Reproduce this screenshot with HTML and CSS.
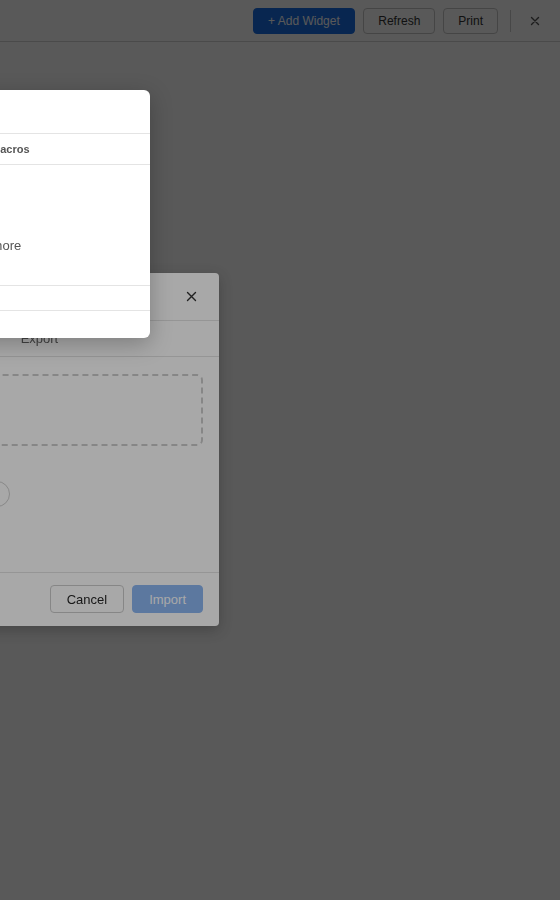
FILE: index.html
```html
<!DOCTYPE html>
<html lang="en">
<head>
<meta charset="utf-8">
<title>Dashboard</title>
<link rel="stylesheet" href="styles.css">
</head>
<body>
  <div class="app">
    <header class="toolbar">
      <button class="tb-btn primary">+ Add Widget</button>
      <button class="tb-btn">Refresh</button>
      <button class="tb-btn">Print</button>
      <span class="tb-divider"></span>
      <button class="tb-close" aria-label="Close">
        <svg width="10" height="10" viewBox="0 0 10 10"><path d="M1.5 1.5L8.5 8.5M8.5 1.5L1.5 8.5" stroke="#555" stroke-width="1.4" stroke-linecap="round"/></svg>
      </button>
    </header>
    <main class="canvas"></main>
  </div>

  <div class="scrim"></div>

  <section class="dialog">
    <div class="dlg-head">
      <h2 class="dlg-title">Import / Export</h2>
      <button class="dlg-close" aria-label="Close">
        <svg width="11" height="11" viewBox="0 0 11 11"><path d="M1.5 1.5L9.5 9.5M9.5 1.5L1.5 9.5" stroke="#333" stroke-width="1.4" stroke-linecap="round"/></svg>
      </button>
    </div>
    <nav class="dlg-tabs">
      <span class="tab active">Import</span>
      <span class="tab">Export</span>
    </nav>
    <div class="dlg-body">
      <div class="dropzone"></div>
      <div class="pill">Paste from clipboard</div>
    </div>
    <div class="dlg-foot">
      <button class="btn">Cancel</button>
      <button class="btn primary" disabled>Import</button>
    </div>
  </section>

  <div class="scrim scrim-top"></div>

  <section class="popup">
    <div class="pop-head">Macros</div>
    <div class="pop-row pop-th">
      <span>Name</span>
      <span>Macros</span>
    </div>
    <div class="pop-empty">
      <svg class="pop-icon" width="28" height="28" viewBox="0 0 28 28"><rect x="3" y="5" width="22" height="18" rx="2" fill="none" stroke="#bbb" stroke-width="1.5"/></svg>
      <p class="pop-empty-text">No macros yet. Learn more</p>
    </div>
    <div class="pop-row pop-sum"><span>Total</span><span></span></div>
    <div class="pop-foot"></div>
  </section>
</body>
</html>
```

FILE: styles.css
```css
* { box-sizing: border-box; }

html, body {
  margin: 0;
  padding: 0;
}

body {
  width: 560px;
  height: 900px;
  position: relative;
  overflow: hidden;
  background: #ffffff;
  font-family: "Liberation Sans", Arial, sans-serif;
  color: #333333;
}

.app {
  display: flex;
  flex-direction: column;
  height: 100%;
}

.toolbar {
  height: 42px;
  flex: none;
  display: flex;
  align-items: center;
  justify-content: flex-end;
  gap: 8px;
  padding: 0 13px 0 16px;
  background: #ffffff;
  border-bottom: 1px solid #d6d6d6;
}

.tb-btn {
  height: 26px;
  padding: 0 14px;
  border: 1px solid #c8c8c8;
  border-radius: 4px;
  background: #ffffff;
  color: #333333;
  font-family: inherit;
  font-size: 12px;
}

.tb-btn.primary {
  padding: 0 14.5px;
  background: #1a6fe6;
  border-color: #1a6fe6;
  color: #ffffff;
}

.tb-divider {
  width: 1px;
  height: 22px;
  margin: 0 4px;
  background: #cfcfcf;
}

.tb-close {
  width: 24px;
  height: 24px;
  padding: 0;
  border: 0;
  background: none;
  display: flex;
  align-items: center;
  justify-content: center;
}

.canvas {
  flex: 1;
}

.scrim {
  position: fixed;
  inset: 0;
  background: rgba(0, 0, 0, 0.47);
}

.scrim-top {
  background: rgba(0, 0, 0, 0.34);
}

/* Import / export dialog */
.dialog {
  position: absolute;
  top: 273px;
  left: -209px;
  width: 428px;
  background: #ffffff;
  border-radius: 4px;
  box-shadow: 0 4px 14px rgba(0, 0, 0, 0.22);
  display: flex;
  flex-direction: column;
}

.dlg-head {
  height: 48px;
  display: flex;
  align-items: center;
  justify-content: space-between;
  padding: 0 16px;
  border-bottom: 1px solid #e3e3e3;
}

.dlg-title {
  margin: 0;
  font-size: 15px;
  font-weight: bold;
  color: #222222;
}

.dlg-close {
  width: 24px;
  height: 24px;
  padding: 0;
  border: 0;
  background: none;
  display: flex;
  align-items: center;
  justify-content: center;
}

.dlg-tabs {
  height: 36px;
  display: flex;
  justify-content: center;
  border-bottom: 1px solid #e3e3e3;
}

.tab {
  padding: 0 16px 1px;
  display: flex;
  align-items: center;
  font-size: 13px;
  color: #666666;
}

.tab.active {
  color: #1a6fe6;
}

.dlg-body {
  height: 215px;
  padding: 17px 16px 0;
  display: flex;
  flex-direction: column;
}

.dropzone {
  height: 72px;
  border: 2px dashed #cccccc;
  border-radius: 6px;
}

.pill {
  margin-top: 35px;
  width: 203px;
  height: 26px;
  border: 1px solid #cfcfcf;
  border-radius: 13px;
  display: flex;
  align-items: center;
  justify-content: center;
  font-size: 12px;
  color: #555555;
}

.dlg-foot {
  display: flex;
  justify-content: flex-end;
  gap: 8px;
  padding: 12px 16px 13px;
  border-top: 1px solid #e3e3e3;
}

.btn {
  height: 28px;
  padding: 0 16px;
  border: 1px solid #cccccc;
  border-radius: 4px;
  background: #ffffff;
  color: #262626;
  font-family: inherit;
  font-size: 13px;
}

.btn.primary {
  background: #1a6fe6;
  border-color: #1a6fe6;
  color: #ffffff;
}

.btn.primary:disabled {
  opacity: 0.5;
}

/* Macros popup */
.popup {
  position: absolute;
  top: 90px;
  left: -268px;
  width: 418px;
  height: 248px;
  background: #ffffff;
  border-radius: 6px;
  box-shadow: 0 6px 22px rgba(0, 0, 0, 0.25);
  display: flex;
  flex-direction: column;
  overflow: hidden;
}

.pop-head {
  height: 44px;
  flex: none;
  display: flex;
  align-items: center;
  padding: 0 16px;
  border-bottom: 1px solid #e4e4e4;
  font-size: 14px;
  font-weight: bold;
  color: #333333;
}

.pop-row {
  display: grid;
  grid-template-columns: 1fr 143px;
  align-items: center;
  padding: 0 16px;
  border-bottom: 1px solid #e4e4e4;
  flex: none;
}

.pop-th {
  height: 31px;
  font-size: 11px;
  font-weight: bold;
  color: #555555;
}

.pop-empty {
  height: 121px;
  flex: none;
  display: flex;
  flex-direction: column;
  align-items: center;
  justify-content: center;
  gap: 8px;
  padding-top: 2px;
  border-bottom: 1px solid #e4e4e4;
}

.pop-icon {
  display: block;
  margin-top: 4px;
}

.pop-empty-text {
  margin: 0;
  padding-left: 3px;
  font-size: 13px;
  line-height: 18px;
  color: #555555;
}

.pop-sum {
  height: 25px;
  font-size: 12px;
  color: #555555;
}

.pop-foot {
  flex: 1;
}
```
